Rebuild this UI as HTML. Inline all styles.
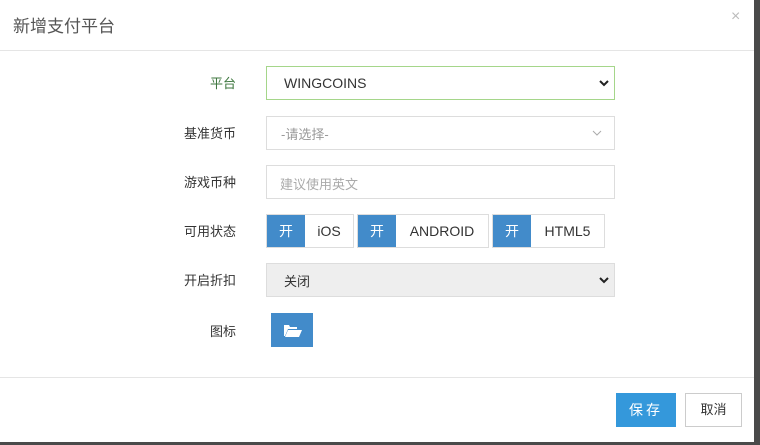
<!DOCTYPE html>
<html><head><style>
body{margin:0;width:760px;height:445px;background:#4a4a4a;font-family:"Liberation Sans","Noto Sans CJK SC",sans-serif;position:relative;overflow:hidden}
.m{position:absolute;left:0;top:0;width:754px;height:442px;background:#fff}
.a{position:absolute}
.lab{position:absolute;right:518px;font-size:13px;color:#333;width:100px;text-align:right}
.box{position:absolute;left:266px;width:347px;height:32px;border:1px solid #ddd;box-sizing:content-box;font-size:14px}
.tg{position:absolute;top:214px;height:32px;border:1px solid #ddd;font-size:14px;color:#333;display:flex}
.tg b{font-weight:normal;background:#428bca;color:#fff;width:38px;text-align:center;line-height:32px}
.tg span{flex:1;text-align:center;line-height:32px}
</style></head><body>
<div class="m">
<div class="a" style="left:13px;top:12px;font-size:17px;color:#555">新增支付平台</div>
<div class="a" style="left:731px;top:8px;font-size:16px;color:#bbb">×</div>
<div class="a" style="left:0;top:50px;width:754px;height:1px;background:#e5e5e5"></div>

<div class="lab" style="top:73px;color:#3c763d">平台</div>
<div class="box" style="top:66px;border-color:#a5d68a;color:#333"><span class="a" style="left:17px;top:8px">WINGCOINS</span><svg class="a" style="right:5px;top:12px" width="10" height="8"><path d="M1 2l4 4 4-4" stroke="#222" stroke-width="2" fill="none"/></svg></div>

<div class="lab" style="top:123px">基准货币</div>
<div class="box" style="top:116px;color:#999"><span class="a" style="left:14px;top:7px;font-size:13px">-请选择-</span><svg class="a" style="right:12px;top:13px" width="10" height="7"><path d="M1 1l4 4 4-4" stroke="#aaa" stroke-width="1" fill="none"/></svg></div>

<div class="lab" style="top:172px">游戏币种</div>
<div class="box" style="top:165px;color:#aaa"><span class="a" style="left:13px;top:8px;font-size:13px">建议使用英文</span></div>

<div class="lab" style="top:221px">可用状态</div>
<div class="tg" style="left:266px;width:86px"><b>开</b><span>iOS</span></div>
<div class="tg" style="left:357px;width:130px"><b>开</b><span>ANDROID</span></div>
<div class="tg" style="left:492px;width:111px"><b>开</b><span>HTML5</span></div>

<div class="lab" style="top:270px">开启折扣</div>
<div class="box" style="top:263px;background:#eee;color:#333"><span class="a" style="left:17px;top:7px;font-size:13px">关闭</span><svg class="a" style="right:5px;top:12px" width="10" height="8"><path d="M1 2l4 4 4-4" stroke="#222" stroke-width="2" fill="none"/></svg></div>

<div class="lab" style="top:321px">图标</div>
<div class="a" style="left:271px;top:313px;width:42px;height:34px;background:#428bca"><svg class="a" style="left:13px;top:11px" width="18" height="13"><path d="M0 1h5l1 2h7v2H4L1 12H0z M4 6h14l-3 7H1z" fill="#fff"/></svg></div>

<div class="a" style="left:0;top:377px;width:754px;height:1px;background:#e5e5e5"></div>
<div class="a" style="left:616px;top:393px;width:60px;height:34px;background:#3498db;color:#fff;font-size:14px;text-align:center;line-height:34px;letter-spacing:3px">保存</div>
<div class="a" style="left:685px;top:393px;width:55px;height:32px;border:1px solid #ccc;color:#333;font-size:13px;text-align:center;line-height:32px">取消</div>
</div>
</body></html>
